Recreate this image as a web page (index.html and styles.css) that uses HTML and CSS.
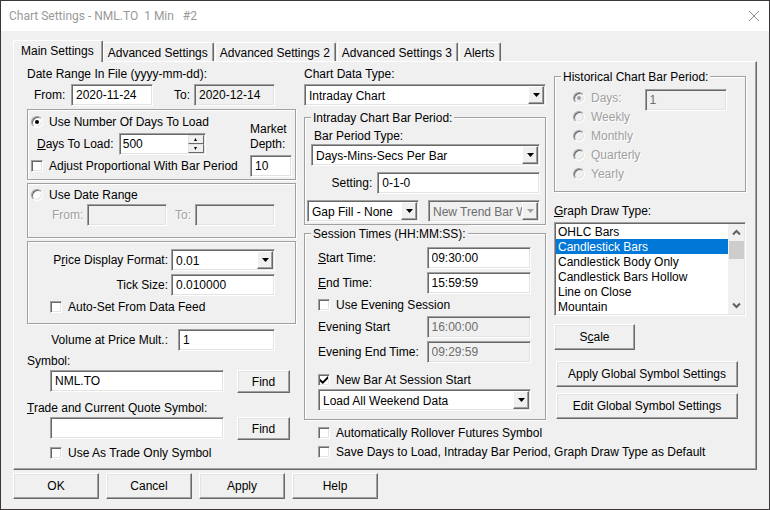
FILE: index.html
```html
<!DOCTYPE html>
<html lang="en">
<head>
<meta charset="utf-8">
<title>Chart Settings</title>
<link rel="stylesheet" href="styles.css">
</head>
<body>
<form class="window" onsubmit="return false">
  <header class="titlebar">
    <h1 class="title">Chart Settings - NML.TO&nbsp; 1 Min &nbsp; #2</h1>
    <button type="button" class="close" aria-label="Close">
      <svg width="12" height="12" viewBox="0 0 12 12"><path d="M1 1L11 11M11 1L1 11" stroke="#8a8a8a" fill="none"/></svg>
    </button>
  </header>

  <div class="tabs" role="tablist">
    <button type="button" role="tab" class="tab tab-active" aria-selected="true">Main Settings</button>
    <button type="button" role="tab" class="tab">Advanced Settings</button>
    <button type="button" role="tab" class="tab">Advanced Settings 2</button>
    <button type="button" role="tab" class="tab">Advanced Settings 3</button>
    <button type="button" role="tab" class="tab">Alerts</button>
  </div>

  <main class="pane" role="tabpanel">
    <section class="col col-data">
      <div class="caption">Date Range In File (yyyy-mm-dd):</div>
      <div class="dates file-dates">
        <label for="file-from">From:</label>
        <input class="box" id="file-from" type="text" value="2020-11-24">
        <label for="file-to">To:</label>
        <input class="box readonly" id="file-to" type="text" value="2020-12-14" readonly>
      </div>

      <fieldset class="group days-group">
        <div class="days-main">
          <label class="check"><input type="radio" name="range" checked>Use Number Of Days To Load</label>
          <div class="days-row">
            <label for="days"><u>D</u>ays To Load:</label>
            <div class="box spin">
              <input id="days" type="text" value="500">
              <span class="spin-buttons">
                <button type="button" aria-label="Increase"><svg width="5" height="3" viewBox="0 0 5 3"><path d="M1 3L2.500 0L4 3Z"/></svg></button>
                <button type="button" aria-label="Decrease"><svg width="5" height="3" viewBox="0 0 5 3"><path d="M1 0L2.500 3L4 0Z"/></svg></button>
              </span>
            </div>
          </div>
          <label class="check"><input type="checkbox">Adjust Proportional With Bar Period</label>
        </div>
        <div class="depth">
          <label for="depth">Market Depth:</label>
          <input class="box" id="depth" type="text" value="10">
        </div>
      </fieldset>

      <fieldset class="group range-group">
        <label class="check"><input type="radio" name="range">Use Date Range</label>
        <div class="dates range-dates">
          <label class="off" for="from">From:</label>
          <input class="box" id="from" type="text" disabled>
          <label class="off" for="to">To:</label>
          <input class="box" id="to" type="text" disabled>
        </div>
      </fieldset>

      <fieldset class="group price-group">
        <label for="format">P<u>r</u>ice Display Format:</label>
        <div class="box combo">
          <select id="format"><option>0.01</option></select>
          <span class="drop"><svg width="7" height="4" viewBox="0 0 7 4"><path d="M0 0H7L3.500 4Z"/></svg></span>
        </div>
        <label for="tick">Tick Size:</label>
        <input class="box" id="tick" type="text" value="0.010000">
        <label class="check wide"><input type="checkbox">Auto-Set From Data Feed</label>
      </fieldset>

      <div class="volume">
        <label for="volume">Volume at Price Mult.:</label>
        <input class="box" id="volume" type="text" value="1">
      </div>

      <div class="symbols">
        <label for="symbol">Symbol:</label>
        <div class="find">
          <input class="box" id="symbol" type="text" value="NML.TO">
          <button type="button" class="button">Find</button>
        </div>
        <label class="spaced" for="trade"><u>T</u>rade and Current Quote Symbol:</label>
        <div class="find">
          <input class="box" id="trade" type="text">
          <button type="button" class="button">Find</button>
        </div>
        <label class="check indent"><input type="checkbox">Use As Trade Only Symbol</label>
      </div>
    </section>

    <section class="col col-session">
      <label class="caption" for="data-type">Chart Data Type:</label>
      <div class="box combo">
        <select id="data-type"><option>Intraday Chart</option></select>
        <span class="drop"><svg width="7" height="4" viewBox="0 0 7 4"><path d="M0 0H7L3.500 4Z"/></svg></span>
      </div>

      <fieldset class="group titled period-group">
        <legend>Intraday Chart Bar Period:</legend>
        <div class="period-type">
          <label for="period">Bar Period Type:</label>
          <div class="box combo">
            <select id="period"><option>Days-Mins-Secs Per Bar</option></select>
            <span class="drop"><svg width="7" height="4" viewBox="0 0 7 4"><path d="M0 0H7L3.500 4Z"/></svg></span>
          </div>
        </div>
        <div class="setting">
          <label for="setting">Setting:</label>
          <input class="box" id="setting" type="text" value="0-1-0">
        </div>
        <div class="pair">
          <div class="box combo">
            <select aria-label="Gap fill"><option>Gap Fill - None</option></select>
            <span class="drop"><svg width="7" height="4" viewBox="0 0 7 4"><path d="M0 0H7L3.500 4Z"/></svg></span>
          </div>
          <div class="box combo combo-off">
            <select aria-label="New trend bar" disabled><option>New Trend Bar W</option></select>
            <span class="drop"><svg width="7" height="4" viewBox="0 0 7 4"><path d="M0 0H7L3.500 4Z"/></svg></span>
          </div>
        </div>
      </fieldset>

      <fieldset class="group titled session-group">
        <legend>Session Times (HH:MM:SS):</legend>
        <div class="times">
          <label for="start"><u>S</u>tart Time:</label>
          <input class="box" id="start" type="text" value="09:30:00">
          <label for="end"><u>E</u>nd Time:</label>
          <input class="box" id="end" type="text" value="15:59:59">
          <label class="check wide"><input type="checkbox">Use Evening Session</label>
          <label for="eve-start">Evening Start</label>
          <input class="box" id="eve-start" type="text" value="16:00:00" disabled>
          <label for="eve-end">Evening End Time:</label>
          <input class="box" id="eve-end" type="text" value="09:29:59" disabled>
        </div>
        <label class="check"><input type="checkbox" checked>New Bar At Session Start</label>
        <div class="box combo">
          <select aria-label="Weekend data"><option>Load All Weekend Data</option></select>
          <span class="drop"><svg width="7" height="4" viewBox="0 0 7 4"><path d="M0 0H7L3.500 4Z"/></svg></span>
        </div>
      </fieldset>

      <div class="options">
        <label class="check"><input type="checkbox">Automatically Rollover Futures Symbol</label>
        <label class="check"><input type="checkbox">Save Days to Load, Intraday Bar Period, Graph Draw Type as Default</label>
      </div>
    </section>

    <section class="col col-draw">
      <fieldset class="group titled history-group">
        <legend>Historical Chart Bar Period:</legend>
        <div class="radios">
          <label class="check off"><input type="radio" name="hist" checked disabled>Days:</label>
          <label class="check off"><input type="radio" name="hist" disabled>Weekly</label>
          <label class="check off"><input type="radio" name="hist" disabled>Monthly</label>
          <label class="check off"><input type="radio" name="hist" disabled>Quarterly</label>
          <label class="check off"><input type="radio" name="hist" disabled>Yearly</label>
        </div>
        <input class="box" type="text" value="1" aria-label="Number of days" disabled>
      </fieldset>

      <label class="draw-label" for="draw"><u>G</u>raph Draw Type:</label>
      <div class="box list">
        <select id="draw" size="6">
          <option>OHLC Bars</option>
          <option selected>Candlestick Bars</option>
          <option>Candlestick Body Only</option>
          <option>Candlestick Bars Hollow</option>
          <option>Line on Close</option>
          <option>Mountain</option>
        </select>
        <div class="scroll">
          <svg width="9" height="17" viewBox="0 0 9 17"><path d="M1 10.500L4.500 7L8 10.500" fill="none" stroke="#606060" stroke-width="2"/></svg>
          <span class="thumb"></span>
          <svg width="9" height="17" viewBox="0 0 9 17"><path d="M1 6.500L4.500 10L8 6.500" fill="none" stroke="#606060" stroke-width="2"/></svg>
        </div>
      </div>
      <button type="button" class="button scale">S<u>c</u>ale</button>
      <div class="global">
        <button type="button" class="button">Apply Global Symbol Settings</button>
        <button type="button" class="button">Edit Global Symbol Settings</button>
      </div>
    </section>
  </main>

  <footer class="actions">
    <button type="submit" class="button">OK</button>
    <button type="button" class="button">Cancel</button>
    <button type="button" class="button">Apply</button>
    <button type="button" class="button">Help</button>
  </footer>
</form>
</body>
</html>
```
FILE: styles.css
```css
* {
  box-sizing: border-box;
}

body {
  margin: 0;
  background: #f0f0f0;
  color: #000;
  font: 12px/14px "Liberation Sans", Arial, sans-serif;
}

input,
select,
button {
  font: inherit;
  color: inherit;
  margin: 0;
}

label,
legend,
.caption {
  white-space: nowrap;
}

/* Window frame */
.window {
  display: flex;
  flex-direction: column;
  min-height: 100vh;
  border: 1px solid #3b3739;
}

.titlebar {
  display: flex;
  align-items: center;
  justify-content: space-between;
  height: 30px;
  padding: 0 9px 0 8px;
  background: #fff;
}

.title {
  margin: 0;
  font: 12px/16px Roboto, "Noto Sans", sans-serif;
  color: #999;
}

.close {
  display: flex;
  padding: 0;
  border: 0;
  background: none;
}

/* Tabs */
.tabs {
  display: flex;
  align-items: flex-end;
  gap: 1px;
  padding: 9px 12px 0;
}

.tab {
  height: 19px;
  padding: 2px 4px 0;
  border: solid;
  border-width: 1px 1px 0 1px;
  border-color: #fff #696969 #fff #fff;
  border-radius: 2px 2px 0 0;
  background: #f0f0f0;
  box-shadow: inset -1px 0 0 #a0a0a0;
  white-space: nowrap;
  padding-right: 5px;
}

.tab-active {
  position: relative;
  height: 22px;
  margin-right: -1px;
  margin-bottom: -1px;
  padding: 0 8px 2px 7px;
}

.pane {
  display: grid;
  grid-template-columns: 269fr 242fr 192fr;
  gap: 8px;
  flex: 1;
  padding: 5px 10px 1px 13px;
  margin: 0 12px;
  border: 1px solid;
  border-color: #fff #696969 #696969 #fff;
  box-shadow: inset -1px -1px 0 #a0a0a0;
}

.col {
  display: flex;
  flex-direction: column;
  min-width: 0;
}

.col-data {
  gap: 3px;
}

/* Sunken boxes */
.box {
  min-width: 0;
  width: 100%;
  height: 22px;
  padding: 1px 4px;
  border: 1px solid;
  border-color: #a0a0a0 #fff #fff #a0a0a0;
  border-radius: 0;
  outline: 0;
  background: #fff;
  box-shadow: inset 1px 1px 0 #696969, inset -1px -1px 0 #e3e3e3;
}

.readonly,
.box:disabled,
.combo-off {
  background: #f0f0f0;
}

.box:disabled {
  color: #6d6d6d;
}

.combo {
  display: flex;
  padding: 1px;
}

.combo select {
  appearance: none;
  flex: 1;
  min-width: 0;
  padding: 1px 0 0 3px;
  border: 0;
  border-radius: 0;
  background: transparent;
}

.combo-off select {
  color: #6d6d6d;
  opacity: 1;
}

.drop {
  display: grid;
  place-items: center;
  flex: 0 0 16px;
  border: 1px solid;
  border-color: #fff #696969 #696969 #fff;
  background: #f0f0f0;
  box-shadow: inset -1px -1px 0 #a0a0a0;
}

.combo-off .drop {
  fill: #a0a0a0;
}

/* Buttons */
.button {
  height: 26px;
  padding: 0;
  border: 1px solid;
  border-color: #fff #696969 #696969 #fff;
  border-radius: 0;
  background: #f0f0f0;
  box-shadow: inset -1px -1px 0 #a0a0a0, inset 1px 1px 0 #e3e3e3;
  white-space: nowrap;
}

/* Tick boxes and radios */
.check {
  display: flex;
  align-items: center;
  gap: 6px;
  height: 16px;
}

.check input {
  appearance: none;
  display: grid;
  place-items: center;
  flex: none;
  width: 12px;
  height: 12px;
  border: 1px solid;
  border-color: #a0a0a0 #fff #fff #a0a0a0;
  background: #fff;
  box-shadow: inset 1px 1px 0 #696969, inset -1px -1px 0 #e3e3e3;
}

.check input[type="radio"] {
  border-radius: 50%;
}

.check input[type="radio"]:disabled {
  background: #f0f0f0;
}

.check input[type="radio"]:checked::after {
  content: "";
  width: 4px;
  height: 4px;
  border-radius: 50%;
  background: #000;
}

.check input[type="radio"]:disabled:checked::after {
  background: #a0a0a0;
}

.check input[type="checkbox"]:checked::after {
  content: "";
  width: 8px;
  height: 8px;
  background: #000;
  clip-path: polygon(0 35%, 35% 65%, 100% 0, 100% 35%, 35% 100%, 0 70%);
}

.off {
  color: #a0a0a0;
  text-shadow: 1px 1px 0 #fff;
}

.wide {
  grid-column: 1 / -1;
}

/* Group frames */
.group {
  min-width: 0;
  margin: 0;
  padding: 0;
  border: 1px solid #a0a0a0;
  box-shadow: 1px 1px 0 #fff, inset 1px 1px 0 #fff;
}

.titled {
  --inset: 2px;
  padding-left: var(--inset);
}

legend {
  margin-left: calc(6px - var(--inset));
  padding: 2px 2px 0;
  background: #f0f0f0;
}

/* Left column */
.dates {
  display: grid;
  align-items: center;
}

.file-dates {
  grid-template-columns: 37fr 82fr 41fr 81fr;
  padding: 0 21px 0 7px;
}

.file-dates label:nth-of-type(2),
.range-dates label:nth-of-type(2) {
  justify-self: end;
  padding-right: 4px;
}

.days-group {
  display: flex;
  justify-content: space-between;
  padding: 4px 3px 2px;
}

.days-main {
  display: flex;
  flex-direction: column;
  gap: 3px;
  padding-bottom: 3px;
}

.days-row {
  display: flex;
  align-items: center;
  justify-content: space-between;
  padding: 0 32px 0 6px;
}

.spin {
  display: flex;
  width: 87px;
  padding: 1px;
}

.spin input {
  flex: 1;
  min-width: 0;
  padding: 0 0 0 2px;
  border: 0;
  outline: 0;
  background: none;
}

.spin-buttons {
  display: grid;
  grid-template-rows: 1fr 1fr;
  flex: 0 0 16px;
}

.spin-buttons button {
  display: grid;
  place-items: center;
  padding: 0;
  border: 1px solid;
  border-color: #e3e3e3 #696969 #696969 #e3e3e3;
  background: #f0f0f0;
}

.depth {
  display: flex;
  flex-direction: column;
  justify-content: flex-end;
  gap: 3px;
  width: 42px;
}

.depth label {
  line-height: 15px;
  white-space: normal;
}

.range-group {
  padding: 3px 3px 11px;
}

.range-dates {
  grid-template-columns: 35fr 80fr 28fr 80fr;
  padding: 1px 17px 0 21px;
}

.price-group {
  display: grid;
  grid-template-columns: 1fr 104px;
  align-items: center;
  justify-items: end;
  gap: 3px;
  padding: 7px 20px 8px 22px;
}

.price-group .wide {
  justify-self: start;
}

.volume {
  display: grid;
  grid-template-columns: 1fr 97px;
  align-items: center;
  justify-items: end;
  gap: 10px;
  padding: 2px 21px 0 0;
}

.symbols {
  display: flex;
  flex-direction: column;
  gap: 2px;
}

.find {
  display: grid;
  grid-template-columns: 174fr 53fr;
  gap: 13px;
  padding: 0 6px 0 23px;
}

.find .button {
  height: 23px;
}

.spaced {
  margin-top: 6px;
}

.indent {
  margin: 3px 0 0 23px;
}

/* Middle column */
.col-session > .caption,
.col-session > .combo {
  margin-bottom: 3px;
}

.period-group {
  display: grid;
  gap: 6px;
  padding: 4px 5px 2px var(--inset);
}

.period-type {
  display: grid;
  gap: 1px;
  padding-left: 4px;
}

.period-type label {
  padding-left: 3px;
}

.setting {
  display: grid;
  grid-template-columns: 65fr 162fr;
  align-items: center;
  justify-items: end;
  gap: 5px;
}

.pair {
  display: grid;
  grid-template-columns: 1fr 1fr;
  gap: 9px;
}

.session-group {
  --inset: 13px;
  padding: 6px 14px 8px var(--inset);
}

.times {
  display: grid;
  grid-template-columns: 27fr 26fr;
  align-items: center;
  gap: 3px 0;
}

.session-group > .check {
  padding-top: 8px;
  height: 26px;
}

.options {
  display: grid;
  gap: 3px;
  padding: 5px 0 0 14px;
}

/* Right column */
.history-group {
  --inset: 18px;
  display: grid;
  grid-template-columns: 72fr 83fr;
  margin-top: 1px;
  padding: 5px 18px 9px var(--inset);
}

.radios {
  display: grid;
  gap: 3px;
  padding-top: 1px;
}

.draw-label {
  margin: 12px 0 4px;
}

.list {
  display: flex;
  height: 94px;
  padding: 1px;
}

.list select {
  flex: 1;
  min-width: 0;
  height: 90px;
  padding: 0;
  border: 0;
  border-radius: 0;
  outline: 0;
  overflow: hidden;
  background: #fff;
}

.list option {
  min-height: 15px;
  height: 15px;
  padding: 1px 2px 0;
  line-height: 14px;
}

.list option:checked {
  background: linear-gradient(#0078d7, #0078d7);
  -webkit-text-fill-color: #fff;
}

.scroll {
  display: flex;
  flex-direction: column;
  align-items: center;
  width: 16px;
  background: #f0f0f0;
}

.thumb {
  width: 15px;
  height: 18px;
  margin-bottom: auto;
  background: #cdcdcd;
}

.scale {
  width: 81px;
  margin: 8px 0 11px;
}

.global {
  display: grid;
  gap: 6px;
  padding: 0 8px 0 2px;
}

/* Bottom buttons */
.actions {
  display: flex;
  gap: 7px;
  padding: 3px 12px 10px;
}

.actions .button {
  width: 86px;
}
```
